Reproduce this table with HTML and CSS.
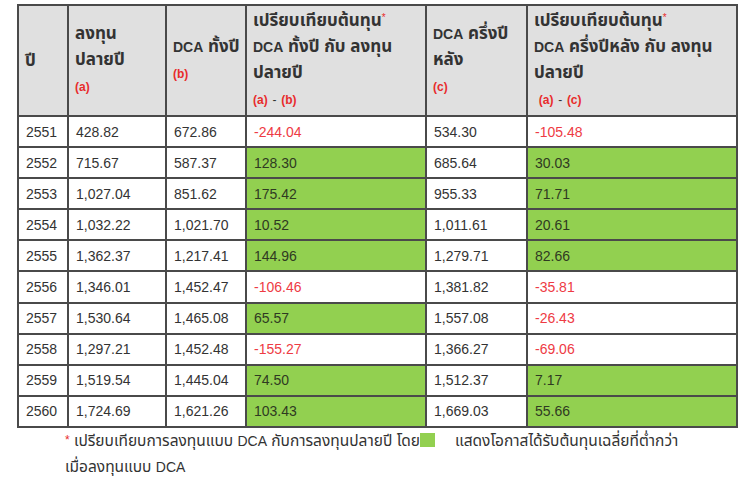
FILE: index.html
```html
<!DOCTYPE html>
<html lang="th">
<head>
<meta charset="utf-8">
<link rel="stylesheet" href="styles.css">
</head>
<body>
<div class="wrap">
<table class="dca">
<colgroup>
<col class="c1"><col class="c2"><col class="c3"><col class="c4"><col class="c5"><col class="c6">
</colgroup>
<thead>
<tr>
<th>ปี</th>
<th>ลงทุน<br>ปลายปี<br><span class="ref">(a)</span></th>
<th><span class="lat">DCA</span> ทั้งปี<br><span class="ref">(b)</span></th>
<th>เปรียบเทียบต้นทุน<span class="star">*</span><br><span class="lat">DCA</span> ทั้งปี กับ ลงทุน<br>ปลายปี<br><span class="ref">(a)</span> <span class="dash">-</span> <span class="ref">(b)</span></th>
<th><span class="lat">DCA</span> ครึ่งปี<br>หลัง<br><span class="ref">(c)</span></th>
<th>เปรียบเทียบต้นทุน<span class="star">*</span><br><span class="lat">DCA</span> ครึ่งปีหลัง กับ ลงทุน<br>ปลายปี<br>&nbsp;<span class="ref">(a)</span> <span class="dash">-</span> <span class="ref">(c)</span></th>
</tr>
</thead>
<tbody>
<tr><td>2551</td><td>428.82</td><td>672.86</td><td class="neg">-244.04</td><td>534.30</td><td class="neg">-105.48</td></tr>
<tr><td>2552</td><td>715.67</td><td>587.37</td><td class="pos">128.30</td><td>685.64</td><td class="pos">30.03</td></tr>
<tr><td>2553</td><td>1,027.04</td><td>851.62</td><td class="pos">175.42</td><td>955.33</td><td class="pos">71.71</td></tr>
<tr><td>2554</td><td>1,032.22</td><td>1,021.70</td><td class="pos">10.52</td><td>1,011.61</td><td class="pos">20.61</td></tr>
<tr><td>2555</td><td>1,362.37</td><td>1,217.41</td><td class="pos">144.96</td><td>1,279.71</td><td class="pos">82.66</td></tr>
<tr><td>2556</td><td>1,346.01</td><td>1,452.47</td><td class="neg">-106.46</td><td>1,381.82</td><td class="neg">-35.81</td></tr>
<tr><td>2557</td><td>1,530.64</td><td>1,465.08</td><td class="pos">65.57</td><td>1,557.08</td><td class="neg">-26.43</td></tr>
<tr><td>2558</td><td>1,297.21</td><td>1,452.48</td><td class="neg">-155.27</td><td>1,366.27</td><td class="neg">-69.06</td></tr>
<tr><td>2559</td><td>1,519.54</td><td>1,445.04</td><td class="pos">74.50</td><td>1,512.37</td><td class="pos">7.17</td></tr>
<tr><td>2560</td><td>1,724.69</td><td>1,621.26</td><td class="pos">103.43</td><td>1,669.03</td><td class="pos">55.66</td></tr>
</tbody>
</table>
<p class="note"><span class="star">*</span> เปรียบเทียบการลงทุนแบบ <span class="latn">DCA</span> กับการลงทุนปลายปี โดย<span class="swatch"></span><span class="gap"></span>แสดงโอกาสได้รับต้นทุนเฉลี่ยที่ต่ำกว่า<br>เมื่อลงทุนแบบ <span class="latn">DCA</span></p>
</div>
</body>
</html>
```
FILE: styles.css
```css
html, body {
  margin: 0;
  padding: 0;
  background: #ffffff;
}
body {
  font-family: "Liberation Sans", "Noto Sans Thai", "Noto Sans", sans-serif;
  color: #333333;
}
.wrap {
  padding: 4px 0 0 17px;
}
.dca {
  border-collapse: collapse;
  width: 719px;
  table-layout: fixed;
  font-size: 14px;
}
.c1 { width: 50px; }
.c2 { width: 98px; }
.c3 { width: 80px; }
.c4 { width: 180px; }
.c5 { width: 101px; }
.c6 { width: 210px; }
.dca th, .dca td {
  border: 2px solid #4a4a4a;
  text-align: left;
  padding: 0 0 0 7px;
}
.dca th {
  background: #e0e0e0;
  height: 109px;
  font-weight: bold;
  font-size: 17px;
  line-height: 26px;
  color: #333;
  vertical-align: middle;
  padding-left: 6px;
}
.dca td {
  height: 29.1px;
  font-size: 14px;
  vertical-align: middle;
}
.lat {
  font-size: 14px;
}
.ref {
  color: #e82c2c;
  font-size: 12px;
  font-weight: bold;
}
.dash {
  font-size: 12px;
  font-weight: normal;
}
.star {
  color: #e82c2c;
  font-size: 10px;
  vertical-align: 5px;
  line-height: 1;
  font-weight: normal;
}
.neg { color: #ee3b44; }
.pos { background: #92d050; color: #2f3a22; }
.note {
  margin: 0 0 0 48px;
  font-size: 15.5px;
  line-height: 26px;
  color: #333;
}
.note .latn { font-size: 14px; }
.note .star { vertical-align: 2px; font-size: 12px; }
.swatch {
  display: inline-block;
  width: 15px;
  height: 14px;
  background: #92d050;
  vertical-align: -1px;
}
.gap {
  display: inline-block;
  width: 20px;
}
```
